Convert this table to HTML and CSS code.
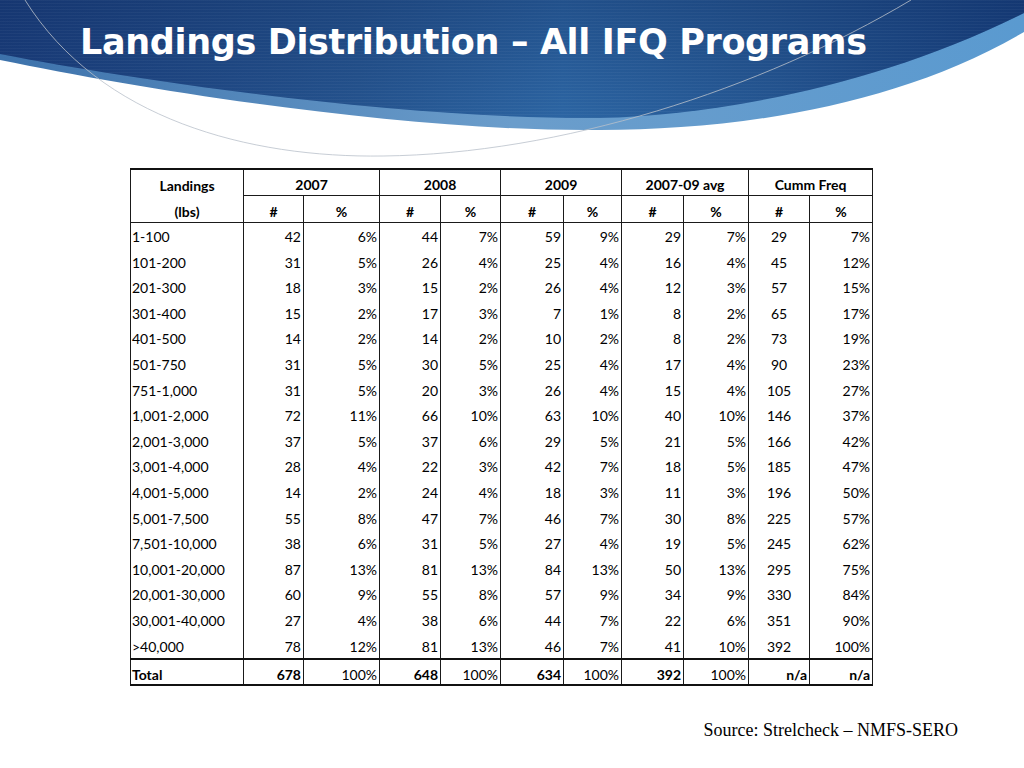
FILE: index.html
```html
<!DOCTYPE html>
<html>
<head>
<meta charset="utf-8">
<title>Landings Distribution</title>
<link rel="stylesheet" href="styles.css">
</head>
<body>
<div class="slide">
  <svg class="swoosh" viewBox="0 0 1024 170" width="1024" height="170" aria-hidden="true">
    <defs>
      <linearGradient id="gDark" x1="0" y1="0" x2="1" y2="0">
        <stop offset="0" stop-color="#1a3d7b"/>
        <stop offset="0.35" stop-color="#25548f"/>
        <stop offset="0.55" stop-color="#2c65a3"/>
        <stop offset="0.75" stop-color="#255793"/>
        <stop offset="1" stop-color="#173f7d"/>
      </linearGradient>
      <linearGradient id="gShade" x1="0" y1="0" x2="0" y2="1">
        <stop offset="0" stop-color="#0e2a5e" stop-opacity="0.35"/>
        <stop offset="1" stop-color="#0e2a5e" stop-opacity="0"/>
      </linearGradient>
      <linearGradient id="gBand" x1="0" y1="0" x2="1" y2="0">
        <stop offset="0" stop-color="#3d72ab"/>
        <stop offset="0.5" stop-color="#6b9dcb"/>
        <stop offset="1" stop-color="#5a9ad0"/>
      </linearGradient>
      <pattern id="stripes" width="4" height="3" patternUnits="userSpaceOnUse">
        <rect width="4" height="1" fill="#ffffff" fill-opacity="0.035"/>
      </pattern>
    </defs>
    <path d="M0,0 H1024 V32 C900,105 740,130 600,130 C420,132 170,95 0,60 Z" fill="url(#gBand)"/>
    <path d="M0,0 H1024 V13 C880,85 720,115 600,118 C420,120 160,85 0,54 Z" fill="url(#gDark)"/>
    <path d="M0,0 H1024 V13 C880,85 720,115 600,118 C420,120 160,85 0,54 Z" fill="url(#gShade)"/>
    <path d="M0,0 H1024 V13 C880,85 720,115 600,118 C420,120 160,85 0,54 Z" fill="url(#stripes)"/>
    <path d="M25,0 C100,120 250,158 383,156 C560,154 760,90 911,0" fill="none" stroke="#b9c0ca" stroke-opacity="0.8" stroke-width="1"/>
  </svg>

  <h1 class="title">Landings Distribution – All IFQ Programs</h1>

  <table class="data">
    <colgroup>
      <col class="c-land"><col class="c60"><col class="c76"><col class="c61"><col class="c60"><col class="c63"><col class="c58"><col class="c62"><col class="c65"><col class="c61"><col class="c63">
    </colgroup>
    <thead>
      <tr class="h1">
        <th class="nb">Landings</th>
        <th colspan="2" class="yr">2007</th>
        <th colspan="2" class="yr">2008</th>
        <th colspan="2" class="yr">2009</th>
        <th colspan="2" class="yr">2007-09 avg</th>
        <th colspan="2" class="yr">Cumm Freq</th>
      </tr>
      <tr class="h2">
        <th>(lbs)</th>
        <th>#</th><th>%</th>
        <th>#</th><th>%</th>
        <th>#</th><th>%</th>
        <th>#</th><th>%</th>
        <th>#</th><th>%</th>
      </tr>
    </thead>
    <tbody>
      <tr><td>1-100</td><td>42</td><td>6%</td><td>44</td><td>7%</td><td>59</td><td>9%</td><td>29</td><td>7%</td><td class="ctr">29</td><td>7%</td></tr>
      <tr><td>101-200</td><td>31</td><td>5%</td><td>26</td><td>4%</td><td>25</td><td>4%</td><td>16</td><td>4%</td><td class="ctr">45</td><td>12%</td></tr>
      <tr><td>201-300</td><td>18</td><td>3%</td><td>15</td><td>2%</td><td>26</td><td>4%</td><td>12</td><td>3%</td><td class="ctr">57</td><td>15%</td></tr>
      <tr><td>301-400</td><td>15</td><td>2%</td><td>17</td><td>3%</td><td>7</td><td>1%</td><td>8</td><td>2%</td><td class="ctr">65</td><td>17%</td></tr>
      <tr><td>401-500</td><td>14</td><td>2%</td><td>14</td><td>2%</td><td>10</td><td>2%</td><td>8</td><td>2%</td><td class="ctr">73</td><td>19%</td></tr>
      <tr><td>501-750</td><td>31</td><td>5%</td><td>30</td><td>5%</td><td>25</td><td>4%</td><td>17</td><td>4%</td><td class="ctr">90</td><td>23%</td></tr>
      <tr><td>751-1,000</td><td>31</td><td>5%</td><td>20</td><td>3%</td><td>26</td><td>4%</td><td>15</td><td>4%</td><td class="ctr">105</td><td>27%</td></tr>
      <tr><td>1,001-2,000</td><td>72</td><td>11%</td><td>66</td><td>10%</td><td>63</td><td>10%</td><td>40</td><td>10%</td><td class="ctr">146</td><td>37%</td></tr>
      <tr><td>2,001-3,000</td><td>37</td><td>5%</td><td>37</td><td>6%</td><td>29</td><td>5%</td><td>21</td><td>5%</td><td class="ctr">166</td><td>42%</td></tr>
      <tr><td>3,001-4,000</td><td>28</td><td>4%</td><td>22</td><td>3%</td><td>42</td><td>7%</td><td>18</td><td>5%</td><td class="ctr">185</td><td>47%</td></tr>
      <tr><td>4,001-5,000</td><td>14</td><td>2%</td><td>24</td><td>4%</td><td>18</td><td>3%</td><td>11</td><td>3%</td><td class="ctr">196</td><td>50%</td></tr>
      <tr><td>5,001-7,500</td><td>55</td><td>8%</td><td>47</td><td>7%</td><td>46</td><td>7%</td><td>30</td><td>8%</td><td class="ctr">225</td><td>57%</td></tr>
      <tr><td>7,501-10,000</td><td>38</td><td>6%</td><td>31</td><td>5%</td><td>27</td><td>4%</td><td>19</td><td>5%</td><td class="ctr">245</td><td>62%</td></tr>
      <tr><td>10,001-20,000</td><td>87</td><td>13%</td><td>81</td><td>13%</td><td>84</td><td>13%</td><td>50</td><td>13%</td><td class="ctr">295</td><td>75%</td></tr>
      <tr><td>20,001-30,000</td><td>60</td><td>9%</td><td>55</td><td>8%</td><td>57</td><td>9%</td><td>34</td><td>9%</td><td class="ctr">330</td><td>84%</td></tr>
      <tr><td>30,001-40,000</td><td>27</td><td>4%</td><td>38</td><td>6%</td><td>44</td><td>7%</td><td>22</td><td>6%</td><td class="ctr">351</td><td>90%</td></tr>
      <tr><td>&gt;40,000</td><td>78</td><td>12%</td><td>81</td><td>13%</td><td>46</td><td>7%</td><td>41</td><td>10%</td><td class="ctr">392</td><td>100%</td></tr>
    </tbody>
    <tfoot>
      <tr class="total"><td class="b">Total</td><td class="b">678</td><td>100%</td><td class="b">648</td><td>100%</td><td class="b">634</td><td>100%</td><td class="b">392</td><td>100%</td><td class="b">n/a</td><td class="b">n/a</td></tr>
    </tfoot>
  </table>

  <p class="source">Source: Strelcheck – NMFS-SERO</p>
</div>
</body>
</html>
```

FILE: styles.css
```css
html, body {
  margin: 0;
  padding: 0;
  background: #ffffff;
}

.slide {
  position: relative;
  width: 1024px;
  height: 768px;
  overflow: hidden;
  background: #ffffff;
}

.swoosh {
  position: absolute;
  left: 0;
  top: 0;
  display: block;
}

.title {
  position: relative;
  margin: 0;
  padding: 20px 0 0 80px;
  height: 44px;
  font-family: "DejaVu Sans", Verdana, sans-serif;
  font-weight: bold;
  font-size: 35px;
  letter-spacing: -0.35px;
  line-height: 44px;
  color: #ffffff;
  white-space: nowrap;
}

.data {
  position: relative;
  margin: 104px 0 0 130px;
  width: 742px;
  table-layout: fixed;
  border-collapse: collapse;
  font-family: Lato, "Open Sans", sans-serif;
  font-size: 14px;
  color: #000000;
  border-top: 2px solid #111;
  border-bottom: 2px solid #111;
}

.c-land { width: 113px; }
.c58 { width: 58px; }
.c60 { width: 60px; }
.c61 { width: 61px; }
.c62 { width: 62px; }
.c63 { width: 63px; }
.c65 { width: 65px; }
.c76 { width: 76px; }

.data th,
.data td {
  border-left: 1px solid #1a1a1a;
  border-right: 1px solid #1a1a1a;
  padding: 0 2px;
  white-space: nowrap;
  overflow: hidden;
}

.data th {
  font-weight: bold;
  text-align: center;
  vertical-align: bottom;
}

.h1 th {
  height: 25px;
  padding-bottom: 0;
  line-height: 20px;
}

.h1 th.yr {
  border-bottom: 1px solid #1a1a1a;
}

.h2 th {
  height: 26px;
  padding-bottom: 0;
  line-height: 20px;
  border-bottom: 1px solid #1a1a1a;
}

.data td {
  height: 22.6px;
  padding-top: 3px;
  line-height: 22.6px;
  text-align: right;
}

.data td:first-child {
  text-align: left;
  padding-left: 1px;
}

.data td.ctr {
  text-align: center;
}

.total td {
  border-top: 2px solid #111;
  height: 18px;
  padding-top: 6px;
  line-height: 18px;
}

.total td.b {
  font-weight: bold;
}

.source {
  margin: 33px 66px 0 0;
  text-align: right;
  font-family: "Liberation Serif", "Times New Roman", serif;
  font-size: 18px;
  line-height: 22px;
  color: #000000;
}
```
